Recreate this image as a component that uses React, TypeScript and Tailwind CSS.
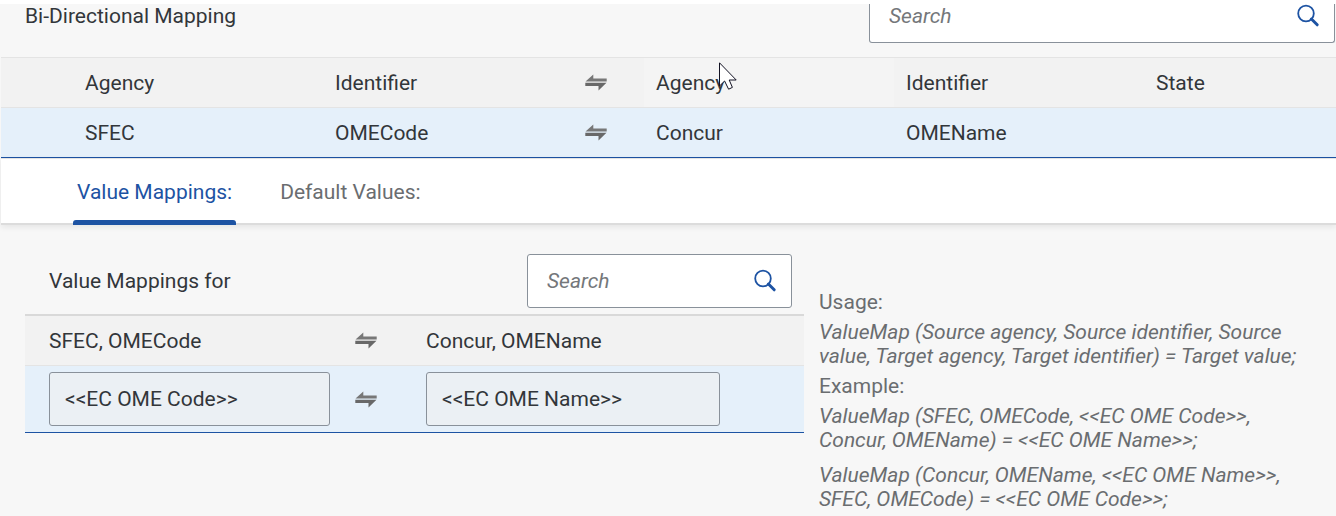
import React from "react";

function SwapIcon() {
  return (
    <svg width="22" height="17" viewBox="0 0 22 17" className="block" aria-hidden="true">
      <path d="M0.5 7.6 L8.3 0.4 V4.4 H21.7 V7.6 Z" fill="#777" />
      <path d="M0.3 8.8 H21.5 L13.5 16.6 V12 H0.3 Z" fill="#686868" />
    </svg>
  );
}

function SearchIcon() {
  return (
    <svg width="24" height="24" viewBox="0 0 24 24" className="block" aria-hidden="true">
      <circle cx="10" cy="9.5" r="7.8" fill="none" stroke="#1d53a3" strokeWidth="1.8" />
      <path d="M15.4 15 L21.2 20.8" stroke="#1d53a3" strokeWidth="3" strokeLinecap="round" />
    </svg>
  );
}

function SearchField({ label, className }: { label: string; className: string }) {
  return (
    <div className={`flex items-center border border-[#89919a] bg-white pr-3.5 pl-[19px] ${className}`}>
      <input
        type="text"
        aria-label={label}
        placeholder="Search"
        className="min-w-0 flex-1 bg-transparent outline-none placeholder:text-[#74777a] placeholder:italic"
      />
      <button type="button" aria-label={`${label} button`}>
        <SearchIcon />
      </button>
    </div>
  );
}

const th = "h-[51px] border-y border-[#e4e4e4] bg-[#f2f2f2] px-3 text-left font-normal";
const td = "h-[50px] border-b border-[#1d53a3] bg-[#e5f0fa] px-3";

export default function App() {
  return (
    <main className="relative min-h-screen border-t-4 border-white bg-[#f7f7f7] font-['Roboto',sans-serif] text-[21px] leading-6 text-[#32363a]">
      <header className="flex items-start justify-between pr-px pl-[25px]">
        <h1>Bi-Directional Mapping</h1>
        <SearchField label="Search mappings" className="h-[39px] w-[466px] rounded-b-[3px] border-t-0 pb-[15px]" />
      </header>

      <div className="mt-3.5 pl-px">
        <table className="w-full table-fixed border-separate border-spacing-0">
          <colgroup>
            <col className="w-[72px]" />
            <col className="w-[250px]" />
            <col className="w-[250px]" />
            <col className="w-[71px]" />
            <col className="w-[250px]" />
            <col className="w-[250px]" />
            <col />
          </colgroup>
          <thead>
            <tr>
              <th className={th} />
              <th className={th}>Agency</th>
              <th className={th}>Identifier</th>
              <th className={th}><SwapIcon /></th>
              <th className="h-[51px] border-y border-[#e4e4e4] bg-[#f4f4f4] px-3 text-left font-normal">Agency</th>
              <th className={th}>Identifier</th>
              <th className={th}>State</th>
            </tr>
          </thead>
          <tbody>
            <tr>
              <td className={td} />
              <td className={td}>SFEC</td>
              <td className={td}>OMECode</td>
              <td className={td}><SwapIcon /></td>
              <td className={td}>Concur</td>
              <td className={td}>OMEName</td>
              <td className={td} />
            </tr>
          </tbody>
        </table>

        <nav className="flex h-[67px] gap-10 border-t border-b-2 border-t-[#e4e4e4] border-b-[#dcdcdc] bg-white pl-[72px] shadow-[0_2px_6px_rgba(0,0,0,0.08)]">
          <button type="button" className="relative -mb-0.5 flex px-1 pt-[21px] text-[#1d53a3]">
            Value Mappings:
            <span className="absolute inset-x-0 bottom-0 h-[5px] rounded-t-[3px] bg-[#1d53a3]" />
          </button>
          <button type="button" className="self-start px-1 pt-[21px] text-[#6a6d70]">Default Values:</button>
        </nav>
      </div>

      <div className="flex items-start gap-[15px] pt-[29px] pl-[25px]">
        <section className="w-[779px] shrink-0">
          <div className="flex items-center justify-between pr-3 pb-1.5 pl-6">
            <h2>Value Mappings for</h2>
            <SearchField label="Search values" className="h-[54px] w-[265px] rounded-[3px]" />
          </div>
          <table className="w-full table-fixed border-separate border-spacing-0">
            <colgroup>
              <col className="w-[306px]" />
              <col className="w-[71px]" />
              <col />
            </colgroup>
            <thead>
              <tr className="h-[52px]">
                <th className="border-t-2 border-b border-t-[#d9d9d9] border-b-[#e4e4e4] bg-[#f2f2f2] pl-6 text-left font-normal">SFEC, OMECode</th>
                <th className="border-t-2 border-b border-t-[#d9d9d9] border-b-[#e4e4e4] bg-[#f2f2f2] pl-6"><SwapIcon /></th>
                <th className="border-t-2 border-b border-t-[#d9d9d9] border-b-[#e4e4e4] bg-[#f2f2f2] pl-6 text-left font-normal">Concur, OMEName</th>
              </tr>
            </thead>
            <tbody>
              <tr className="h-[67px]">
                <td className="border-b border-[#1d53a3] bg-[#e5f0fa] pl-6">
                  <input aria-label="SFEC, OMECode" defaultValue="<<EC OME Code>>" className="block h-[54px] w-[281px] rounded-[3px] border border-[#89919a] bg-[#ebf0f4] px-[15px]" />
                </td>
                <td className="border-b border-[#1d53a3] bg-[#e5f0fa] pl-6"><SwapIcon /></td>
                <td className="border-b border-[#1d53a3] bg-[#e5f0fa] pl-6">
                  <input aria-label="Concur, OMEName" defaultValue="<<EC OME Name>>" className="block h-[54px] w-[294px] rounded-[3px] border border-[#89919a] bg-[#ebf0f4] px-[15px]" />
                </td>
              </tr>
            </tbody>
          </table>
        </section>

        <aside className="min-w-0 flex-1 pt-9 text-[#6a6d70]">
          <p>Usage:</p>
          <p className="mt-1.5 italic">
            ValueMap (Source agency, Source identifier, Source<br />
            value, Target agency, Target identifier) = Target value;
          </p>
          <p className="mt-1.5">Example:</p>
          <p className="mt-1.5 italic">
            ValueMap (SFEC, OMECode, &lt;&lt;EC OME Code&gt;&gt;,<br />
            Concur, OMEName) = &lt;&lt;EC OME Name&gt;&gt;;
          </p>
          <p className="mt-[11px] italic">
            ValueMap (Concur, OMEName, &lt;&lt;EC OME Name&gt;&gt;,<br />
            SFEC, OMECode) = &lt;&lt;EC OME Code&gt;&gt;;
          </p>
        </aside>
      </div>

      <svg width="20" height="29" viewBox="0 0 20 29" className="pointer-events-none absolute top-[58px] left-[719px]" aria-hidden="true">
        <path d="M0.5 0.8 V24 L5.6 19 L9.6 27.2 L13.4 25.4 L10.2 18 H17.2 Z" fill="#fff" stroke="#111122" strokeWidth="1" />
      </svg>
    </main>
  );
}
